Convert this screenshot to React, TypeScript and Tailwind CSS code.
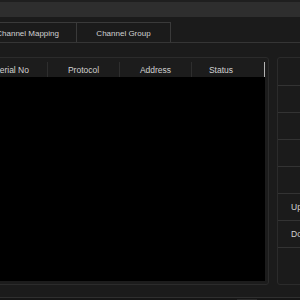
const headers = [
  { label: "Serial No", w: "w-[50px]", align: "justify-end pr-[18px]" },
  { label: "Protocol", w: "w-[71px]", align: "justify-center" },
  { label: "Address", w: "w-[71px]", align: "justify-center" },
  { label: "Status", w: "w-[72px]", align: "justify-center pr-[14px]" },
];

const sideRows = ["", "", "", "", "", "Up", "Down"];

const Sep = () => <div className="w-px h-[15px] self-end bg-[#2e2e2e] shrink-0" />;

const App = () => {
  return (
    <div className="w-[300px] h-[300px] overflow-hidden bg-[#1b1b1b] text-[#d2d2d2] text-[8.5px] font-['Liberation_Sans',Arial,sans-serif] flex flex-col">
      {/* title strip */}
      <div className="h-[2px] bg-[#1f1f1f] shrink-0" />
      <div className="h-[15px] bg-[#2e2e2e] shrink-0" />
      <div className="h-[5px] shrink-0" />

      {/* tabs */}
      <div className="h-[21px] flex border-b border-[#353535] shrink-0 text-[8px]">
        <div className="w-[77px] h-[20px] flex items-center justify-end pr-[17px] pt-[2px] border-t border-r border-[#3a3a3a] whitespace-nowrap overflow-hidden">
          Channel Mapping
        </div>
        <div className="w-[94px] h-[20px] flex items-center justify-center pt-[2px] border-t border-r border-[#3a3a3a] whitespace-nowrap">
          Channel Group
        </div>
      </div>

      <div className="h-[14px] shrink-0" />

      {/* main */}
      <div className="h-[228px] flex shrink-0">
        <div className="ml-[-4px] w-[273px] h-full border border-[#2b2b2b] rounded-[3px] bg-[#1c1c1c] flex flex-col pr-[3px] pb-[3px] shrink-0">
          <div className="h-[19px] flex shrink-0">
            {headers.map((h, i) => (
              <div key={h.label} className="flex h-full">
                <div
                  className={`${h.w} h-full flex items-center pt-[6px] ${h.align} whitespace-nowrap overflow-hidden`}
                >
                  {h.label}
                </div>
                {i < 3 && <Sep />}
              </div>
            ))}
            <div className="w-[2px] mt-[4px] h-[15px] bg-[#b4b4b4]" />
          </div>
          <div className="flex-1 bg-black" />
        </div>

        <div className="ml-[8px] w-[40px] h-full border border-[#2b2b2b] rounded-[3px] flex flex-col shrink-0">
          {sideRows.map((r, i) => (
            <div
              key={i}
              className={`${i === 0 ? "h-[28px]" : "h-[27px]"} border-b border-[#333333] flex items-center pl-[13px] whitespace-nowrap`}
            >
              {r}
            </div>
          ))}
        </div>
      </div>

      {/* status strip */}
      <div className="h-[12px] shrink-0" />
      <div className="h-[1px] bg-[#2f2f2f] shrink-0" />
      <div className="flex-1 bg-[#161616] flex items-end">
        <div className="ml-[237px] w-[20px] h-[1px] bg-[#2a2a2a]" />
      </div>
    </div>
  );
};

export default App;
